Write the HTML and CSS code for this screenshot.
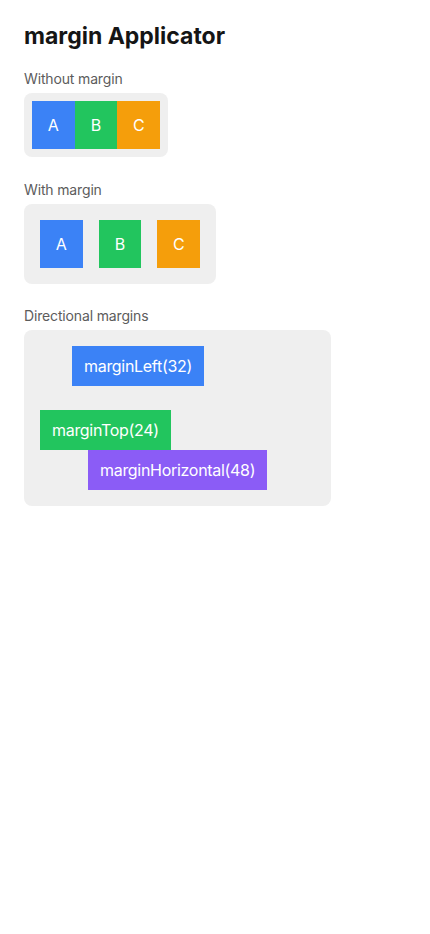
FILE: index.html
```html
<!DOCTYPE html>
<html>
<head>
<meta charset="utf-8">
<link rel="stylesheet" href="styles.css">
</head>
<body>
<div class="page">
  <h1 class="title">margin Applicator</h1>

  <section class="section">
    <div class="label">Without margin</div>
    <div class="panel panel-row">
      <div class="sq blue">A</div>
      <div class="sq green">B</div>
      <div class="sq orange">C</div>
    </div>
  </section>

  <section class="section">
    <div class="label">With margin</div>
    <div class="panel panel-row">
      <div class="sq blue m8">A</div>
      <div class="sq green m8">B</div>
      <div class="sq orange m8">C</div>
    </div>
  </section>

  <section class="section">
    <div class="label">Directional margins</div>
    <div class="panel panel-col">
      <div class="chip blue ml32">marginLeft(32)</div>
      <div class="chip green mt24">marginTop(24)</div>
      <div class="chip purple mh48">marginHorizontal(48)</div>
    </div>
  </section>
</div>
</body>
</html>
```

FILE: styles.css
```css
* { box-sizing: border-box; }
html, body { margin: 0; padding: 0; background: #ffffff; }
body {
  font-family: Inter, "Liberation Sans", sans-serif;
  color: #111111;
}
.page {
  padding: 20px 24px;
  display: flex;
  flex-direction: column;
  align-items: flex-start;
}
.title {
  margin: 0 0 18px 0;
  font-size: 23px;
  line-height: 32px;
  font-weight: 700;
  color: #151515;
}
.section {
  display: flex;
  flex-direction: column;
  align-items: flex-start;
  margin-bottom: 24px;
}
.section:nth-of-type(2) { margin-bottom: 23px; }
.label {
  font-size: 14px;
  line-height: 17px;
  color: #5c5c5c;
  margin-bottom: 6px;
  letter-spacing: -0.15px;
}
.panel {
  background: #efefef;
  border-radius: 8px;
}
.panel-row {
  display: flex;
  flex-direction: row;
  padding: 8px;
}
.panel-col {
  display: flex;
  flex-direction: column;
  align-items: flex-start;
  padding: 16px;
}
.sq {
  width: 42.7px;
  height: 48px;
  display: flex;
  align-items: center;
  justify-content: center;
  color: #ffffff;
  font-size: 16px;
}
.m8 { margin: 8px; }
.chip {
  height: 40px;
  padding: 0 12px;
  display: flex;
  align-items: center;
  color: #ffffff;
  font-size: 16px;
  letter-spacing: -0.3px;
  white-space: nowrap;
}
.ml32 { margin-left: 32px; }
.mt24 { margin-top: 24px; }
.mh48 { margin-left: 48px; margin-right: 48px; }
.blue { background: #3b82f6; }
.green { background: #22c55e; }
.orange { background: #f59e0b; }
.purple { background: #8b5cf6; }
```
